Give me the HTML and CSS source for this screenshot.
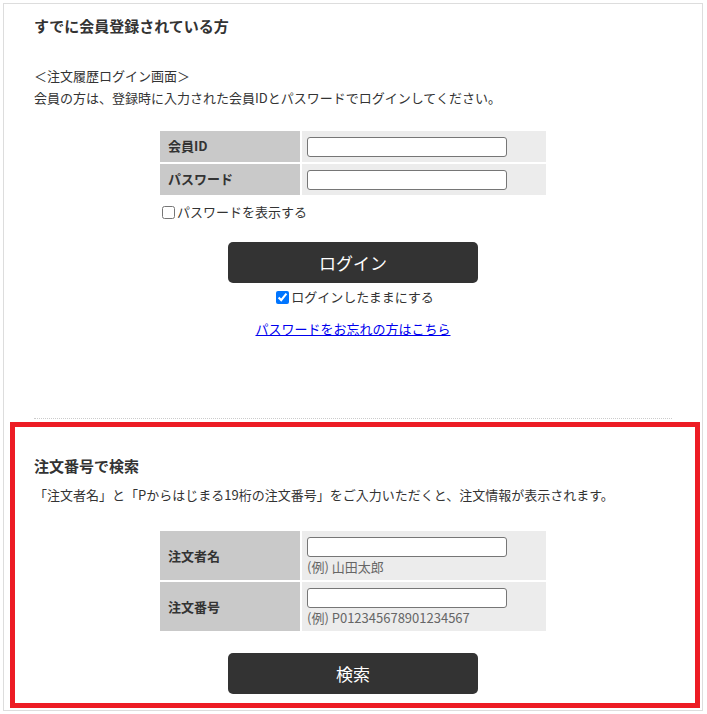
FILE: index.html
```html
<!DOCTYPE html>
<html lang="ja">
<head>
<meta charset="utf-8">
<title>ログイン</title>
<link rel="stylesheet" href="styles.css">
</head>
<body>
<div class="page">
  <section class="login">
    <h2 class="title">すでに会員登録されている方</h2>
    <p class="lead">＜注文履歴ログイン画面＞<br>会員の方は、登録時に入力された会員IDとパスワードでログインしてください。</p>
    <div class="form-block">
      <table class="form-table">
        <tr>
          <th>会員ID</th>
          <td><input type="text" class="field"></td>
        </tr>
        <tr>
          <th>パスワード</th>
          <td><input type="password" class="field"></td>
        </tr>
      </table>
      <label class="check"><input type="checkbox">パスワードを表示する</label>
    </div>
    <div class="actions">
      <button class="btn" type="button">ログイン</button>
      <label class="check keep"><input type="checkbox" checked>ログインしたままにする</label>
      <a class="forgot" href="#">パスワードをお忘れの方はこちら</a>
    </div>
    <hr class="sep">
  </section>
  <section class="order">
    <h2 class="title">注文番号で検索</h2>
    <p class="lead">「注文者名」と「Pからはじまる19桁の注文番号」をご入力いただくと、注文情報が表示されます。</p>
    <table class="form-table tall">
      <tr>
        <th>注文者名</th>
        <td><input type="text" class="field"><span class="note">(例) 山田太郎</span></td>
      </tr>
      <tr>
        <th>注文番号</th>
        <td><input type="text" class="field"><span class="note">(例) P012345678901234567</span></td>
      </tr>
    </table>
    <div class="actions">
      <button class="btn search" type="button">検索</button>
    </div>
  </section>
</div>
</body>
</html>
```

FILE: styles.css
```css
* { box-sizing: border-box; }
html, body { margin: 0; padding: 0; background: #fff; }
body {
  font-family: "Noto Sans CJK JP", "Noto Sans", sans-serif;
  font-size: 13px;
  color: #333;
}
.page {
  margin: 3px 0 0 3px;
  width: 700px;
  border: 1px solid #ddd;
  padding-bottom: 2px;
}
.login { padding: 11px 30px 0; }
.title {
  margin: 0;
  font-size: 15px;
  line-height: 22px;
  font-weight: bold;
  color: #333;
}
.lead {
  margin: 28px 0 0;
  line-height: 22px;
}
.form-block {
  width: 390px;
  margin: 20px auto 0;
}
.form-table {
  border-collapse: separate;
  border-spacing: 2px;
  width: 390px;
}
.form-block .form-table { margin: 0; }
.form-table th {
  width: 140px;
  background: #c9c9c9;
  text-align: left;
  font-weight: bold;
  padding: 0 8px 2px;
  height: 31px;
  color: #333;
}
.form-table td {
  background: #ececec;
  padding: 0 5px;
  height: 31px;
}
.field {
  display: block;
  width: 200px;
  height: 20px;
  border: 1px solid #767676;
  border-radius: 3px;
  background: #fff;
  padding: 0 3px;
  font: inherit;
}
.check {
  display: flex;
  align-items: center;
  line-height: 22px;
  margin-top: 4px;
}
.check input {
  width: 13px;
  height: 13px;
  margin: 0 2px 0 4px;
}
.actions {
  display: flex;
  flex-direction: column;
  align-items: center;
}
.btn {
  width: 250px;
  height: 41px;
  margin-top: 19px;
  background: #333;
  color: #fff;
  border: none;
  border-radius: 5px;
  font-family: inherit;
  font-size: 17px;
}
.keep { margin-top: 3px; padding-left: 4px; }
.keep input { margin-left: 0; }
.forgot {
  margin-top: 10px;
  line-height: 22px;
  color: #0000ee;
  text-decoration: underline;
}
.sep {
  margin: 78px 0 0;
  border: none;
  border-top: 1px dotted #ccc;
  height: 0;
}
.order {
  margin: 3px 0 0 6px;
  width: 690px;
  border: 5px solid #ed1c24;
  padding: 28px 23px 9px 19px;
}
.order .lead { margin-top: 7px; }
.tall { margin: 23px 0 0 124px; }
.tall th { height: 49px; padding-bottom: 0; }
.tall td { height: 49px; padding: 6px 5px 3px; vertical-align: top; }
.note {
  display: block;
  line-height: 20px;
  color: #666;
  font-size: 13px;
}
.search { margin-top: 20px; }
```
